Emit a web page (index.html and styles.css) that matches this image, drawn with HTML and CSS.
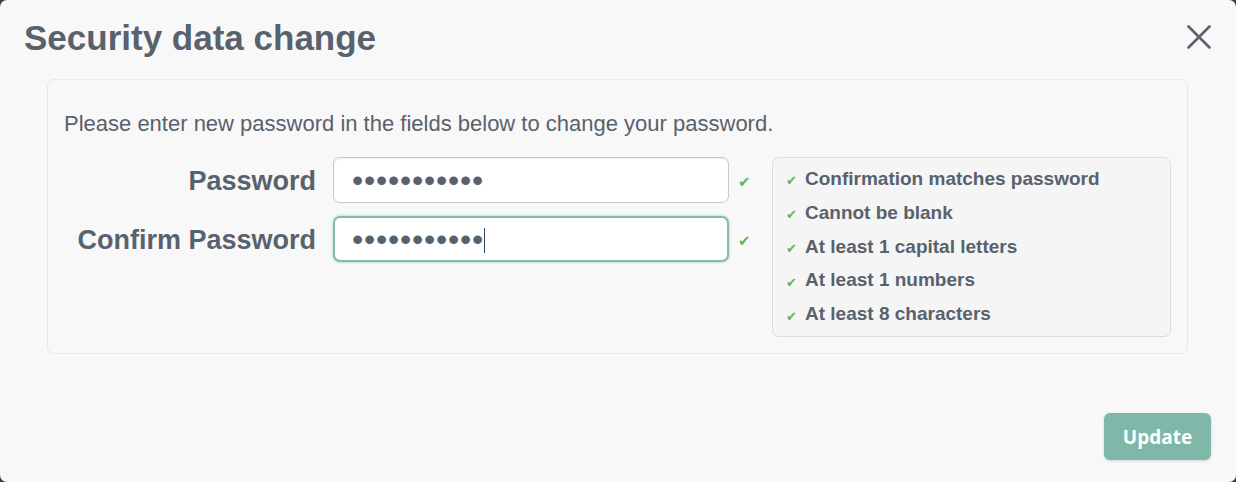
FILE: index.html
```html
<!DOCTYPE html>
<html lang="en">
<head>
<meta charset="utf-8">
<title>Security data change</title>
<link rel="stylesheet" href="styles.css">
</head>
<body>
<div class="modal">
  <div class="modal-header">
    <h1 class="modal-title">Security data change</h1>
    <button class="close-btn" aria-label="Close">
      <svg width="24" height="24" viewBox="0 0 24 24"><path d="M1.5 1.5 L22.5 22.5 M22.5 1.5 L1.5 22.5" stroke="#5a636c" stroke-width="2.6" stroke-linecap="round" fill="none"/></svg>
    </button>
  </div>
  <div class="panel">
    <p class="intro">Please enter new password in the fields below to change your password.</p>
    <div class="form-area">
      <div class="fields">
        <div class="field-row">
          <label class="field-label" for="pw">Password</label>
          <div class="input-wrap">
            <input id="pw" class="field-input" type="password" value="abcdefghijk">
          </div>
          <span class="ok">✔</span>
        </div>
        <div class="field-row">
          <label class="field-label" for="pw2">Confirm Password</label>
          <div class="input-wrap">
            <input id="pw2" class="field-input focused" type="password" value="abcdefghijk">
            <span class="caret"></span>
          </div>
          <span class="ok">✔</span>
        </div>
      </div>
      <ul class="rules">
        <li><span class="ok small">✔</span>Confirmation matches password</li>
        <li><span class="ok small">✔</span>Cannot be blank</li>
        <li><span class="ok small">✔</span>At least 1 capital letters</li>
        <li><span class="ok small">✔</span>At least 1 numbers</li>
        <li><span class="ok small">✔</span>At least 8 characters</li>
      </ul>
    </div>
  </div>
  <div class="modal-footer">
    <button class="update-btn">Update</button>
  </div>
</div>
</body>
</html>
```

FILE: styles.css
```css
* { box-sizing: border-box; }
html, body { margin: 0; padding: 0; }
body {
  background: #3a3f44;
  width: 1236px;
  height: 482px;
  overflow: hidden;
  font-family: "Liberation Sans", Arial, sans-serif;
  color: #58626c;
}
.modal {
  width: 1236px;
  height: 482px;
  background: #f8f8f8;
  border-radius: 7px;
  display: flex;
  flex-direction: column;
}
.modal-header {
  display: flex;
  justify-content: space-between;
  align-items: flex-start;
  padding: 18px 25px 0 24px;
  height: 79px;
}
.modal-title {
  margin: 0;
  font-size: 35px;
  font-weight: bold;
  line-height: 40px;
  color: #58626c;
}
.close-btn {
  border: 0;
  background: transparent;
  padding: 0;
  margin-top: 7px;
  width: 24px;
  height: 24px;
  cursor: pointer;
}
.close-btn svg { display: block; }
.panel {
  margin: 0 48px 0 47px;
  border: 1px solid #e9e9e9;
  border-radius: 7px;
  padding: 31px 16px 16px 16px;
}
.intro {
  margin: 0 0 20px 0;
  font-size: 22px;
  line-height: 26px;
}
.form-area {
  display: flex;
  align-items: flex-start;
}
.fields {
  display: flex;
  flex-direction: column;
  gap: 13px;
}
.field-row {
  display: grid;
  grid-template-columns: 252px 396px 34px;
  column-gap: 17px;
  align-items: center;
}
.field-row .ok { justify-self: start; margin-left: -8px; padding-top: 4px; }
.field-label {
  text-align: right;
  font-weight: bold;
  font-size: 27px;
  color: #58626c;
  padding-top: 3px;
}
.input-wrap { position: relative; }
.field-input {
  display: block;
  width: 396px;
  height: 46px;
  border: 1px solid #c8c8c8;
  border-radius: 7px;
  background: #fff;
  padding: 0 18px;
  font-family: "Liberation Sans", Arial, sans-serif;
  font-size: 32px;
  letter-spacing: 0.8px;
  color: #58626c;
  outline: none;
  box-shadow: inset 0 1px 2px rgba(0,0,0,0.06);
}
.field-input.focused {
  border: 2px solid #84bcac;
  box-shadow: 0 0 3px rgba(100,170,150,0.6);
  padding-left: 17px;
}
.caret {
  position: absolute;
  left: 151px;
  top: 12px;
  width: 1px;
  height: 25px;
  background: #3c4650;
}
.ok {
  color: #5cb85c;
  font-family: "DejaVu Sans", sans-serif;
  font-size: 15px;
}
.rules {
  list-style: none;
  margin: 0 0 0 -8px;
  padding: 4px 12px 6px 13px;
  width: 399px;
  height: 180px;
  background: #f5f5f5;
  border: 1px solid #dcdcdc;
  border-radius: 7px;
}
.rules li {
  font-size: 19px;
  font-weight: bold;
  height: 33.8px;
  line-height: 33.8px;
  display: flex;
  align-items: center;
}
.ok.small {
  font-size: 13px;
  width: 19px;
  line-height: 1;
  padding-top: 4px;
}
.modal-footer {
  flex: 1;
  display: flex;
  justify-content: flex-end;
  align-items: flex-end;
  padding: 0 25px 22px 0;
}
.update-btn {
  width: 107px;
  height: 47px;
  border: 0;
  border-radius: 6px;
  background: #7fb8a9;
  color: #fff;
  font-family: "Open Sans", "Liberation Sans", sans-serif;
  font-weight: bold;
  font-size: 19px;
  box-shadow: 0 1px 3px rgba(0,0,0,0.15);
  cursor: pointer;
}
```
